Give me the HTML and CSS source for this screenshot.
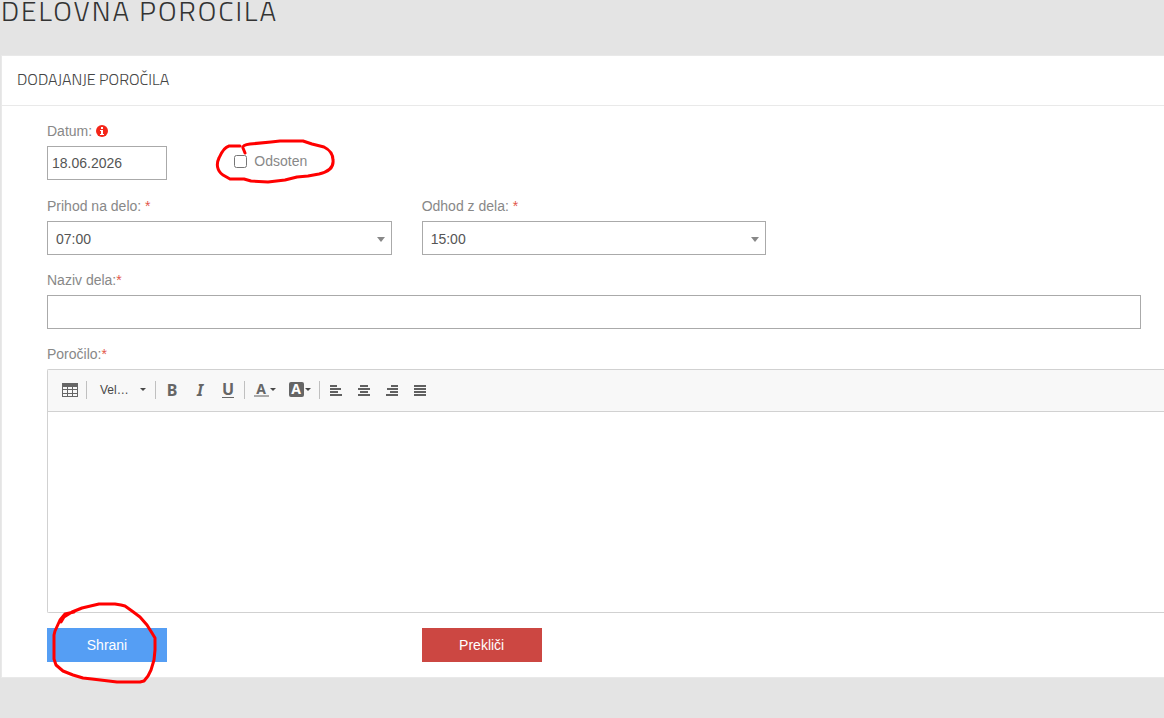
FILE: index.html
```html
<!DOCTYPE html>
<html lang="sl">
<head>
<meta charset="utf-8">
<title>Delovna poročila</title>
<link rel="stylesheet" href="styles.css">
</head>
<body>
<h1 class="page-title">DELOVNA POROČILA</h1>
<main class="panel">
  <h2 class="panel-title">DODAJANJE POROČILA</h2>
  <form class="form">
    <div class="row row-six">
      <div class="field">
        <label for="date">Datum:
          <svg class="info" viewBox="0 0 12 12" aria-hidden="true"><circle cx="6" cy="6" r="6" fill="#f42619"/><path d="M5 2h2v2H5zM4 5h3v4h1v1H4V9h1V6H4z" fill="#fff"/></svg>
        </label>
        <input class="control date" id="date" type="text" value="18.06.2026">
      </div>
      <div class="check-wrap">
        <input class="check" id="absent" type="checkbox">
        <label for="absent">Odsoten</label>
        <svg class="mark mark-check" viewBox="0 0 120 48" aria-hidden="true"><path d="M29 15L27 10Q26 7 34 6L55 4L64 3H87L96 6L108 9C114 12 117 16 117 22C118 30 112 34 103 36L92 38L81 39L69 42L52 44L35 43L28 41H14L7 37C1 33 0 26 3 20C6 13 9 9 13 8H24"/></svg>
      </div>
    </div>
    <div class="row row-three">
      <div class="field">
        <label for="arrive">Prihod na delo: <span class="req">*</span></label>
        <div class="select-wrap"><select class="control select" id="arrive"><option>07:00</option></select></div>
      </div>
      <div class="field">
        <label for="leave">Odhod z dela: <span class="req">*</span></label>
        <div class="select-wrap"><select class="control select" id="leave"><option>15:00</option></select></div>
      </div>
    </div>
    <div class="field">
      <label for="name">Naziv dela:<span class="req">*</span></label>
      <input class="control" id="name" type="text">
    </div>
    <div class="field">
      <label for="report">Poročilo:<span class="req">*</span></label>
      <div class="editor">
        <div class="toolbar">
          <button class="tool" type="button" aria-label="Tabela"><svg width="16" height="14" viewBox="0 0 16 14"><path d="M0 0h16v14H0zM1 4v2h4V4zM6 4v2h4V4zM11 4v2h4V4zM1 7v3h4V7zM6 7v3h4V7zM11 7v3h4V7zM1 11v2h4v-2zM6 11v2h4v-2zM11 11v2h4v-2z" fill="#666" fill-rule="evenodd"/></svg></button>
          <span class="sep"></span>
          <button class="tool size" type="button">Vel…<span class="caret"></span></button>
          <span class="sep"></span>
          <button class="tool glyph" type="button">B</button>
          <button class="tool glyph italic" type="button">I</button>
          <button class="tool glyph" type="button"><span class="under">U</span></button>
          <span class="sep"></span>
          <button class="tool color" type="button"><span class="fore">A</span><span class="caret"></span></button>
          <button class="tool color" type="button"><span class="back">A</span><span class="caret"></span></button>
          <span class="sep"></span>
          <button class="tool" type="button" aria-label="Levo"><svg width="12" height="12" viewBox="0 0 12 12"><path d="M0 1h7v2H0zM0 4h11v2H0zM0 7h8v2H0zM0 10h12v2H0z" fill="#606060"/></svg></button>
          <button class="tool" type="button" aria-label="Sredina"><svg width="12" height="12" viewBox="0 0 12 12"><path d="M2 1h8v2H2zM0 4h12v2H0zM2 7h8v2H2zM0 10h12v2H0z" fill="#606060"/></svg></button>
          <button class="tool" type="button" aria-label="Desno"><svg width="12" height="12" viewBox="0 0 12 12"><path d="M5 1h7v2H5zM1 4h11v2H1zM4 7h8v2H4zM0 10h12v2H0z" fill="#606060"/></svg></button>
          <button class="tool" type="button" aria-label="Obojestransko"><svg width="12" height="12" viewBox="0 0 12 12"><path d="M0 1h12v2H0zM0 4h12v2H0zM0 7h12v2H0zM0 10h12v2H0z" fill="#606060"/></svg></button>
        </div>
        <textarea class="editor-area" id="report"></textarea>
      </div>
    </div>
    <div class="row row-three actions">
      <div class="save-wrap">
        <button class="btn save" type="button">Shrani</button>
        <svg class="mark mark-save" viewBox="0 0 106 84" aria-hidden="true"><path d="M23 10L14 12L9 18L4 29L3 33V57L5 63L12 69L22 73L32 76L41 77L66 80H89L93 79L97 74L100 68L103 58L104 48V36L101 31L96 23L89 15L81 9L74 4L70 3L64 2H48L31 6L21 10L13 15L10 20"/></svg>
      </div>
      <button class="btn cancel" type="button">Prekliči</button>
    </div>
  </form>
</main>
</body>
</html>
```
FILE: styles.css
```css
* { box-sizing: border-box; }
body {
  display: flow-root;
  min-height: 100vh;
  margin: 0;
  background: #e4e4e4;
  color: #888;
  font: 14px/20px "Liberation Sans", Arial, sans-serif;
}
.page-title {
  margin: -7px 0 26px 1px;
  color: #333;
  font: 300 28px/36px "Titillium Web", Roboto, sans-serif;
  letter-spacing: 2px;
}
.panel {
  margin-left: 1px;
  background: #fff;
  border: 1px solid #e9e9e9;
  border-right: 0;
}
.panel-title {
  margin: 0;
  padding: 13px 15px 16px;
  border-bottom: 1px solid #e9e9e9;
  color: #444;
  font: 300 16px/20px "Titillium Web", Roboto, sans-serif;
}
.form {
  display: flex;
  flex-direction: column;
  gap: 15px;
  padding: 15px 23px 15px 45px;
}
.row { display: grid; column-gap: 30px; }
.row-six { grid-template-columns: repeat(6, 1fr); padding-bottom: 1px; }
.row-three { grid-template-columns: repeat(3, 1fr); }
.field { display: flex; flex-direction: column; gap: 5px; }
.info { width: 12px; height: 12px; vertical-align: -1px; }
.req { color: #e2574c; }
.control {
  width: 100%;
  height: 34px;
  padding: 0 4px;
  border: 1px solid #aaa;
  border-radius: 0;
  background: #fff;
  color: #555;
  font: inherit;
}
.date { width: 120px; }
.select { appearance: none; padding: 2px 8px 0; }
.select-wrap { position: relative; }
.select-wrap::after {
  content: "";
  position: absolute;
  right: 7px;
  top: 16px;
  border: 4px solid transparent;
  border-top: 5px solid #888;
  border-bottom: 0;
}
.check-wrap {
  position: relative;
  display: flex;
  align-items: center;
  gap: 7px;
  height: 20px;
  margin-top: 30px;
}
.check { width: 13px; height: 13px; margin: 0; }
.mark {
  position: absolute;
  overflow: visible;
  pointer-events: none;
  fill: none;
  stroke: #f00;
  stroke-width: 3;
  stroke-linecap: round;
  stroke-linejoin: round;
}
.mark-check { left: -18px; top: -13px; width: 120px; height: 48px; }
.editor {
  margin-right: -23px;
  border: 1px solid #d1d1d1;
  border-right: 0;
  border-radius: 2px 0 0 2px;
}
.toolbar {
  display: flex;
  align-items: center;
  height: 42px;
  padding: 0 0 2px 8px;
  border-bottom: 1px solid #d1d1d1;
  background: #f8f8f8;
}
.tool {
  display: flex;
  align-items: center;
  justify-content: center;
  width: 28px;
  height: 28px;
  padding: 0;
  border: 0;
  background: none;
  color: #666;
  font: 12px/16px "Liberation Sans", Arial, sans-serif;
}
.sep { width: 1px; height: 18px; margin: 0 2px; background: #c0c0c0; }
.size { width: 64px; justify-content: space-between; padding: 0 7px 0 11px; color: #484848; }
.caret { border: 3px solid transparent; border-top-color: #484848; border-bottom: 0; }
.glyph { font: 700 16px/18px "Noto Sans", sans-serif; }
.italic { font-style: italic; }
.under { height: 16px; line-height: 15px; border-bottom: 1px solid #666; }
.color { width: 35px; gap: 1px; }
.fore, .back {
  width: 15px;
  height: 15px;
  font: 700 14px/14px "Noto Sans", sans-serif;
}
.fore { border-bottom: 2px solid #aaa; }
.back { border-radius: 2px; background: #666; color: #fff; }
.editor-area {
  display: block;
  width: 100%;
  height: 200px;
  padding: 12px;
  border: 0;
  background: #fff;
  resize: none;
}
.actions { align-items: start; }
.save-wrap { position: relative; }
.btn {
  width: 120px;
  height: 34px;
  padding: 0;
  border: 0;
  color: #fff;
  font: inherit;
}
.save { display: block; background: #559ef4; }
.cancel { background: #cc4742; }
.mark-save { left: 4px; top: -26px; width: 106px; height: 84px; }
```
